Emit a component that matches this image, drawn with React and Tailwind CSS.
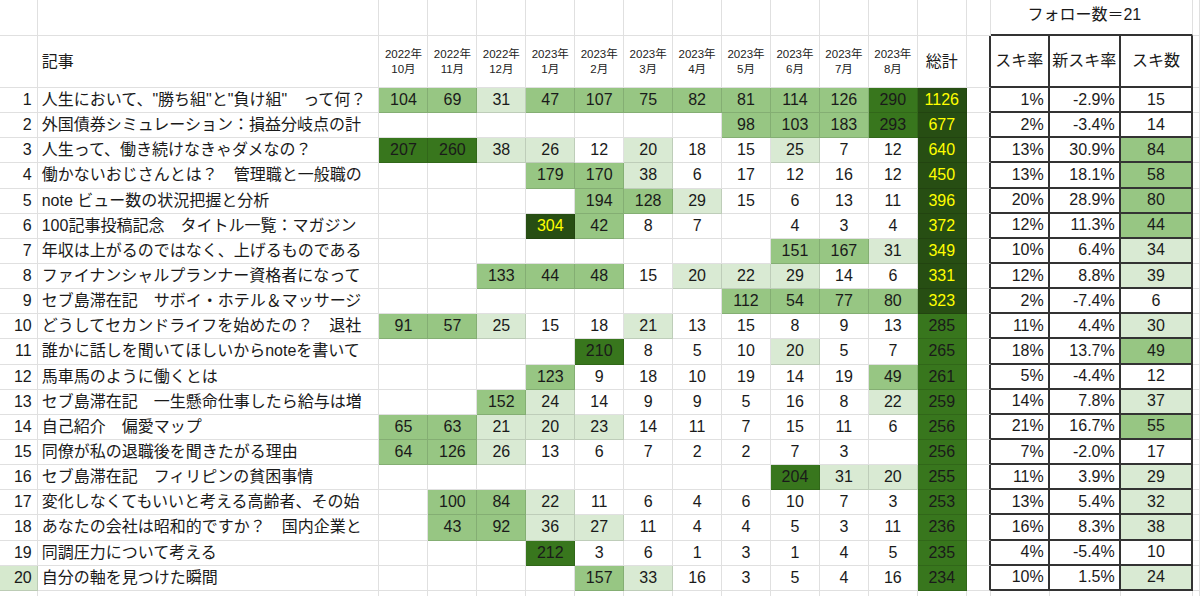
import React from "react";

const titles = [
  "人生において、\"勝ち組\"と\"負け組\"　って何？",
  "外国債券シミュレーション：損益分岐点の計",
  "人生って、働き続けなきゃダメなの？",
  "働かないおじさんとは？　管理職と一般職の",
  "note ビュー数の状況把握と分析",
  "100記事投稿記念　タイトル一覧：マガジン",
  "年収は上がるのではなく、上げるものである",
  "ファイナンシャルプランナー資格者になって",
  "セブ島滞在記　サボイ・ホテル＆マッサージ",
  "どうしてセカンドライフを始めたの？　退社",
  "誰かに話しを聞いてほしいからnoteを書いて",
  "馬車馬のように働くとは",
  "セブ島滞在記　一生懸命仕事したら給与は増",
  "自己紹介　偏愛マップ",
  "同僚が私の退職後を聞きたがる理由",
  "セブ島滞在記　フィリピンの貧困事情",
  "変化しなくてもいいと考える高齢者、その始",
  "あなたの会社は昭和的ですか？　国内企業と",
  "同調圧力について考える",
  "自分の軸を見つけた瞬間",
];

const monthData = [
  "104M 69M 31L 47M 107M 75M 82M 81M 114M 126M 290D",
  "- - - - - - - 98M 103M 183M 293D",
  "207D 260D 38L 26L 12 20L 18 15 25L 7 12",
  "- - - 179M 170M 38L 6 17 12 16 12",
  "- - - - 194M 128M 29L 15 6 13 11",
  "- - - 304X 42M 8 7 - 4 3 4",
  "- - - - - - - - 151M 167M 31L",
  "- - 133M 44M 48M 15 20L 22L 29L 14 6",
  "- - - - - - - 112M 54M 77M 80M",
  "91M 57M 25L 15 18 21L 13 15 8 9 13",
  "- - - - 210D 8 5 10 20L 5 7",
  "- - - 123M 9 18 10 19 14 19 49M",
  "- - 152M 24L 14 9 9 5 16 8 22L",
  "65M 63M 21L 20L 23L 14 11 7 15 11 6",
  "64M 126M 26L 13 6 7 2 2 7 3 -",
  "- - - - - - - - 204D 31L 20L",
  "- 100M 84M 22L 11 6 4 6 10 7 3",
  "- 43M 92M 36L 27L 11 4 4 5 3 11",
  "- - - 212D 3 6 1 3 1 4 5",
  "- - - - 157M 33L 16 3 5 4 16",
];

const totals = [1126, 677, 640, 450, 396, 372, 349, 331, 323, 285, 265, 261, 259, 256, 256, 255, 253, 236, 235, 234];

const stats = [
  ["1%", "-2.9%", "15", "W"],
  ["2%", "-3.4%", "14", "W"],
  ["13%", "30.9%", "84", "M"],
  ["13%", "18.1%", "58", "M"],
  ["20%", "28.9%", "80", "M"],
  ["12%", "11.3%", "44", "M"],
  ["10%", "6.4%", "34", "L"],
  ["12%", "8.8%", "39", "L"],
  ["2%", "-7.4%", "6", "W"],
  ["11%", "4.4%", "30", "L"],
  ["18%", "13.7%", "49", "M"],
  ["5%", "-4.4%", "12", "W"],
  ["14%", "7.8%", "37", "L"],
  ["21%", "16.7%", "55", "M"],
  ["7%", "-2.0%", "17", "W"],
  ["11%", "3.9%", "29", "L"],
  ["13%", "5.4%", "32", "L"],
  ["16%", "8.3%", "38", "L"],
  ["4%", "-5.4%", "10", "W"],
  ["10%", "1.5%", "24", "L"],
];

const shade = {
  W: "bg-white",
  L: "bg-[#d9ead3]",
  M: "bg-[#97c683]",
  D: "bg-[#38761d]",
  X: "bg-[#274e13] text-[#ffff00]",
};

const months = [
  ["2022年", "10月"],
  ["2022年", "11月"],
  ["2022年", "12月"],
  ["2023年", "1月"],
  ["2023年", "2月"],
  ["2023年", "3月"],
  ["2023年", "4月"],
  ["2023年", "5月"],
  ["2023年", "6月"],
  ["2023年", "7月"],
  ["2023年", "8月"],
];

const G = "border-r border-b border-black/[0.12]";
const STAT = "border-r-2 border-b-2 border-[#333]";
const GAP = "border-b border-b-black/[0.12] border-r-2 border-r-[#333]";

function parse(tok) {
  if (tok === "-") return ["", "W"];
  const last = tok[tok.length - 1];
  if ("LMDX".includes(last)) return [tok.slice(0, -1), last];
  return [tok, "W"];
}

export default function App() {
  return (
    <div className="w-[1200px] h-[596px] overflow-hidden bg-white text-[#1a1a1a] font-['Liberation_Sans','Noto_Sans_CJK_JP',sans-serif]">
      <div className="grid h-[596px] grid-cols-[37.7px_341.8px_repeat(12,48.95px)_24px_59px_71px_72.3px_1fr] grid-rows-[36px_52px_repeat(20,25.15px)_1fr]">
        {/* Top row */}
        <div className={G}></div>
        <div className={G}></div>
        {Array.from({ length: 12 }).map((_, i) => (
          <div key={"t" + i} className={G}></div>
        ))}
        <div className={G}></div>
        <div className="col-span-3 border-r border-r-black/[0.12] border-b-2 border-b-[#333] flex justify-center pt-[3px] pr-[14px] text-[16px]">
          フォロー数＝21
        </div>
        <div className={G}></div>

        {/* Header row */}
        <div className={G}></div>
        <div className={`${G} flex items-center pl-[4px] text-[16px]`}>記事</div>
        {months.map(([y, m], i) => (
          <div key={"m" + i} className={`${G} flex flex-col items-center justify-center text-[11.5px] leading-[15px] text-[#222]`}>
            <span>{y}</span>
            <span>{m}</span>
          </div>
        ))}
        <div className={`${G} flex items-center justify-center text-[16px]`}>総計</div>
        <div className={GAP}></div>
        <div className={`${STAT} flex items-center justify-center text-[16px]`}>スキ率</div>
        <div className={`${STAT} flex items-center justify-center text-[16px]`}>新スキ率</div>
        <div className={`${STAT} flex items-center justify-center text-[16px]`}>スキ数</div>
        <div className={G}></div>

        {/* Data rows */}
        {titles.map((title, r) => {
          const cells = monthData[r].split(" ").map(parse);
          const [rate, newRate, likes, likeShade] = stats[r];
          return (
            <React.Fragment key={"r" + r}>
              <div className={`${G} flex items-center justify-end pr-[5px] text-[16px] ${r === 19 ? "bg-[#d6e9ce]" : ""}`}>
                {r + 1}
              </div>
              <div className={`${G} flex items-center pl-[4px] text-[16px] whitespace-nowrap overflow-hidden`}>{title}</div>
              {cells.map(([v, s], c) => (
                <div key={c} className={`${G} ${shade[s]} flex items-center justify-center text-[16px]`}>
                  {v}
                </div>
              ))}
              <div className={`${G} ${r < 9 ? "bg-[#274e13] text-[#ffff00]" : "bg-[#38761d]"} flex items-center justify-center text-[16px]`}>
                {totals[r]}
              </div>
              <div className={GAP}></div>
              <div className={`${STAT} flex items-center justify-end pr-[4px] text-[16px]`}>{rate}</div>
              <div className={`${STAT} flex items-center justify-end pr-[4px] text-[16px]`}>{newRate}</div>
              <div className={`${STAT} ${shade[likeShade]} flex items-center justify-center text-[16px]`}>{likes}</div>
              <div className={G}></div>
            </React.Fragment>
          );
        })}

        {/* Bottom partial row */}
        {Array.from({ length: 19 }).map((_, i) => (
          <div key={"b" + i} className="border-r border-black/[0.12]"></div>
        ))}
      </div>
    </div>
  );
}
